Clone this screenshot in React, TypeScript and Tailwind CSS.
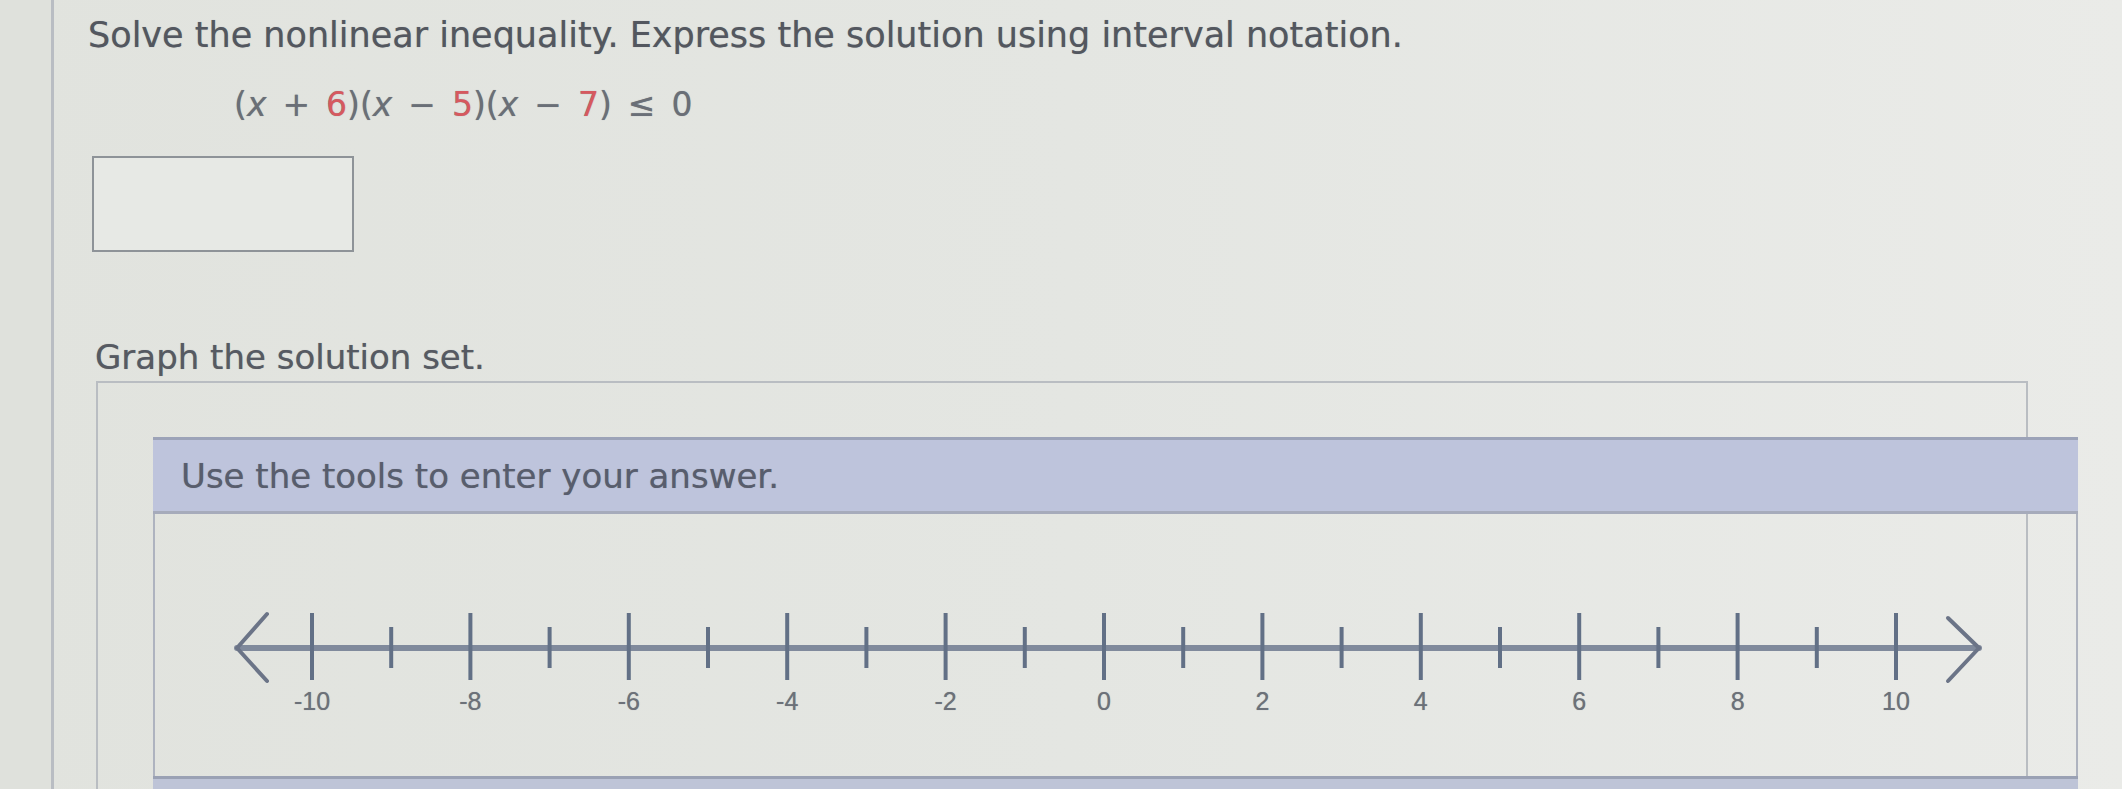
import React from "react";

function NumberLine() {
  const xs = (v: number) => 949 + 79.2 * v;
  const ticks: number[] = [];
  for (let v = -10; v <= 10; v++) ticks.push(v);
  return (
    <svg width="1920" height="258" viewBox="0 0 1920 258" className="block">
      <line x1="82" y1="134" x2="1824" y2="134" stroke="#808a9c" strokeWidth="6" strokeLinecap="round" />
      <polyline points="112,100 82,134 112,167" fill="none" stroke="#6b7487" strokeWidth="4" strokeLinecap="round" strokeLinejoin="round" />
      <polyline points="1793,104 1824,134 1793,167" fill="none" stroke="#6b7487" strokeWidth="4" strokeLinecap="round" strokeLinejoin="round" />
      {ticks.map((v) => {
        const major = v % 2 === 0;
        return (
          <line
            key={v}
            x1={xs(v)}
            x2={xs(v)}
            y1={major ? 99 : 113}
            y2={major ? 166 : 154}
            stroke="#627086"
            strokeWidth="4"
          />
        );
      })}
      {ticks
        .filter((v) => v % 2 === 0)
        .map((v) => (
          <text
            key={"l" + v}
            x={xs(v)}
            y={189}
            textAnchor="middle"
            dominantBaseline="middle"
            fontFamily="'Liberation Sans', Arial, sans-serif"
            fontSize="25"
            fill="#6c7179"
          >
            {v < 0 ? "-" + Math.abs(v) : String(v)}
          </text>
        ))}
    </svg>
  );
}

export default function App() {
  return (
    <div className="flex h-[789px] w-[2122px] overflow-hidden bg-gradient-to-r from-[#e1e3de] via-[#e4e6e2] to-[#eaebe8] font-['DejaVu_Sans',sans-serif] [text-shadow:0_0_0.7px_rgba(80,84,92,0.6)]">
      <div className="w-[54px] shrink-0 border-r-[3px] border-[#b9bdc3] bg-[#dfe1dc]" />
      <div className="flex min-w-0 flex-1 flex-col pl-[34px] pt-[16px]">
        <h1 className="shrink-0 whitespace-nowrap text-[35px] leading-[38px] text-[#53575f]">
          Solve the nonlinear inequality. Express the solution using interval notation.
        </h1>
        <div className="mt-[33px] shrink-0 whitespace-nowrap pl-[146px] text-[33px] leading-[36px] text-[#6a6f77]">
          (<span className="italic">x</span>
          <span className="mx-[16px]">+</span>
          <span className="text-[#d6595f]">6</span>)(<span className="italic">x</span>
          <span className="mx-[16px]">−</span>
          <span className="text-[#d6595f]">5</span>)(<span className="italic">x</span>
          <span className="mx-[16px]">−</span>
          <span className="text-[#d6595f]">7</span>)
          <span className="mx-[16px]">≤</span>0
        </div>
        <div className="ml-[4px] mt-[33px] h-[96px] w-[262px] shrink-0 border-2 border-[#8e9398] bg-[#e7e9e5]" />
        <p className="ml-[7px] mt-[86px] shrink-0 text-[34px] leading-[38px] text-[#565a62]">Graph the solution set.</p>
        <div className="ml-[8px] mt-[5px] flex w-[1932px] flex-1 shrink-0 flex-col border-2 border-b-0 border-[#b9bdc2] pl-[55px] pt-[54px]">
          <div className="w-[1925px] shrink-0">
            <div className="flex h-[77px] items-center border-y-[3px] border-t-[#9ca3b8] border-b-[#a6abbb] bg-[#bec4dc] pl-[28px]">
              <span className="text-[34px] leading-[38px] text-[#585d6d]">Use the tools to enter your answer.</span>
            </div>
            <div className="h-[262px] border-x-2 border-[#aeb3bf]">
              <NumberLine />
            </div>
            <div className="h-[20px] border-t-[3px] border-[#9aa1b4] bg-[#bec4d7]" />
          </div>
        </div>
      </div>
    </div>
  );
}
